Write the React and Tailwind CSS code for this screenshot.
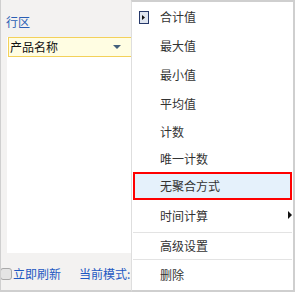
const FONT = { fontFamily: '"Noto Sans CJK SC", "Microsoft YaHei", sans-serif' }

// heights tuned so each label lands where the reference has it
const items = [
  { label: '合计值', h: 'h-[29px]', icon: true },
  { label: '最大值', h: 'h-[29px]' },
  { label: '最小值', h: 'h-[29px]' },
  { label: '平均值', h: 'h-[29px]' },
  { label: '计数', h: 'h-[27px]' },
  { label: '唯一计数', h: 'h-[27px]' },
  { label: '无聚合方式', h: 'h-[28px]', active: true },
  { label: '时间计算', h: 'h-[31px]', sub: true },
]

function PickedIcon() {
  return (
    <svg width="10" height="13" viewBox="0 0 10 13">
      <rect x="0.5" y="0.5" width="9" height="12" fill="#dfe5ef" stroke="#26396a" />
      <path d="M3 4 L6 6.5 L3 9 Z" fill="#111" />
    </svg>
  )
}

function MenuItem({ label, h, icon, active, sub }) {
  if (active) {
    return (
      <div className={`${h} mx-px flex items-center border-2 border-[#ff0000] bg-[#e5f1fb] pl-[25px] text-[#333]`}>
        {label}
      </div>
    )
  }
  return (
    <div className={`${h} relative flex items-center text-[#333]`}>
      <div className="w-[28px] shrink-0 pl-[7px] pt-[2px]">{icon && <PickedIcon />}</div>
      <span>{label}</span>
      {sub && (
        <span className="absolute right-[1px] top-[11px] h-0 w-0 border-y-[4px] border-l-[4px] border-y-transparent border-l-[#111]" />
      )}
    </div>
  )
}

function Separator() {
  return (
    <div className="flex h-[2px] items-center px-px">
      <div className="h-px w-full bg-[#e3e3e3]" />
    </div>
  )
}

export default function App() {
  return (
    <div className="flex h-[292px] w-[295px] text-[12px] leading-[14px]" style={FONT}>
      <div className="flex w-[131px] shrink-0 flex-col overflow-hidden border-b-2 border-l border-[#cfcfcf] bg-[#f3f2f1]">
        <div className="h-[37px] pl-[5px] pt-[15px] text-[#2b5fb4]">行区</div>
        <div className="ml-[6px] h-[216px] bg-white">
          <div className="ml-px flex h-[20px] items-center border border-r-0 border-[#f3d15a] bg-[#fffde2] pl-px text-[#111]">
            <span className="flex-1">产品名称</span>
            <span className="mr-[10px] h-0 w-0 border-x-[4px] border-t-[4px] border-x-transparent border-t-[#44607c]" />
          </div>
        </div>
        <div className="mt-[14px] flex items-center whitespace-nowrap text-[#1d58c2]">
          <span className="-ml-px h-[12px] w-[12px] shrink-0 rounded-[3px] border border-[#a9a9a9] bg-[#e4e4e4]" />
          <span className="ml-px shrink-0">立即刷新</span>
          <span className="ml-[18px] shrink-0">当前模式:</span>
        </div>
      </div>
      <div className="flex w-[164px] flex-col border-y-2 border-r-2 border-l border-y-[#cfcfcf] border-r-[#cfcfcf] border-l-[#dedede] bg-white">
        {items.map((it) => (
          <MenuItem key={it.label} {...it} />
        ))}
        <Separator />
        <div className="flex h-[25px] items-center pl-[28px] text-[#333]">高级设置</div>
        <Separator />
        <div className="flex h-[30px] items-center pl-[28px] text-[#333]">删除</div>
      </div>
    </div>
  )
}
